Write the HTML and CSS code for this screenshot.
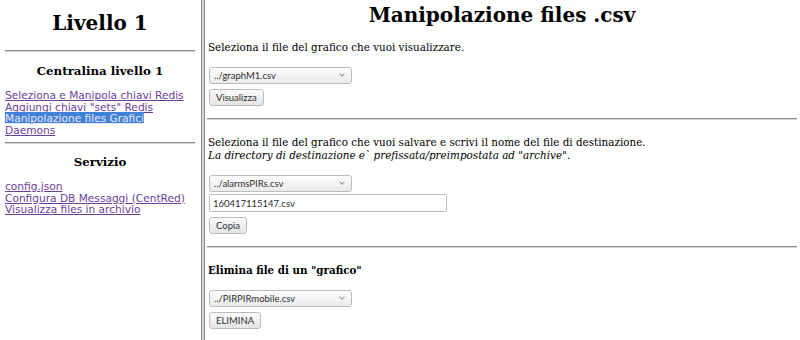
FILE: index.html
```html
<!DOCTYPE html>
<html lang="it">
<head>
    <meta charset="UTF-8">
    <title>Manipolazione files .csv</title>
    <link rel="stylesheet" href="styles.css">
</head>
<body>

    <div class="menu">
        <h1 class="menu__title">Livello 1</h1>
        <hr>
        <h3 class="menu__head">Centralina livello 1</h3>
        <div class="menu__links">
            <a href="#">Seleziona e Manipola chiavi Redis</a><br>
            <a href="#">Aggiungi chiavi "sets" Redis</a><br>
            <a href="#" class="sel">Manipolazione files Grafici</a><br>
            <a href="#">Daemons</a>
        </div>
        <hr>
        <h3 class="menu__head">Servizio</h3>
        <div class="menu__links">
            <a href="#">config.json</a><br>
            <a href="#">Configura DB Messaggi (CentRed)</a><br>
            <a href="#">Visualizza files in archivio</a>
        </div>
    </div>

    <div class="divider"></div>

    <div class="main">
        <h1 class="main__title">Manipolazione files .csv</h1>

        <form class="block block--first">
            <p>Seleziona il file del grafico che vuoi visualizzare.</p>
            <div class="select">../graphM1.csv</div>
            <button type="button">Visualizza</button>
        </form>
        <hr>

        <form class="block">
            <p>Seleziona il file del grafico che vuoi salvare e scrivi il nome del file di destinazione.<br>
            <i>La directory di destinazione e` prefissata/preimpostata ad "archive"</i>.</p>
            <div class="select">../alarmsPIRs.csv</div>
            <input type="text" value="160417115147.csv">
            <button type="button">Copia</button>
        </form>
        <hr>

        <form class="block">
            <h3 class="block__head">Elimina file di un "grafico"</h3>
            <div class="select">../PIRPIRmobile.csv</div>
            <button type="button">ELIMINA</button>
        </form>
    </div>

</body>
</html>
```

FILE: styles.css
```css
body {
    margin: 0;
    height: 340px;
    display: flex;
    font: 10.4px "DejaVu Serif", serif;
    color: #000;
    background: #fff;
}

hr {
    border: none;
    border-top: 1px solid #8c8c8c;
    border-bottom: 1px solid #d6d6d6;
    margin: 0;
}

/* left frame */
.menu {
    width: 190px;
    padding: 0 5px;
}
.menu__title {
    font-size: 20px;
    line-height: 23px;
    text-align: center;
    margin: 12px 0 15px;
}
.menu__head {
    font-size: 11.8px;
    line-height: 14px;
    text-align: center;
    margin: 12px 0 12px;
}
.menu hr + .menu__head + .menu__links + hr + .menu__head {
    margin-top: 11px;
}
.menu__links {
    font-family: "DejaVu Sans", sans-serif;
    font-size: 10.6px;
    line-height: 11.5px;
    margin-bottom: 6px;
}
.menu__links a {
    color: #6b3d9c;
}
.menu__links a.sel {
    background: #3f81d8;
    color: #ece6f6;
}

.divider {
    width: 2px;
    margin: 0 1px;
    border-left: 1px solid #8a8a8a;
    border-right: 1px solid #8a8a8a;
    background: #d6d6d6;
}

/* right frame */
.main {
    flex: 1;
    padding: 0 3px 0 1px;
}
.main__title {
    font-size: 20px;
    line-height: 23px;
    text-align: center;
    margin: 4px 0 1px;
}
.block {
    display: flex;
    flex-direction: column;
    align-items: flex-start;
    padding: 16px 0 12px 1px;
}
.block--first {
    padding-top: 13px;
}
.block p {
    margin: 0 0 13px;
    line-height: 13px;
}
.block__head {
    font-size: 10.3px;
    line-height: 13px;
    margin: 0 0 13px;
}

.select,
button,
input {
    font: 9.5px Lato, sans-serif;
    color: #2e2e2e;
    border: 1px solid #bcbcbc;
    border-radius: 3px;
    box-sizing: border-box;
    margin: 0 0 0 1px;
}
.select {
    width: 143px;
    height: 17px;
    line-height: 15px;
    padding: 0 4px;
    background: linear-gradient(#fdfdfd, #eaeaea);
    position: relative;
}
.select::after {
    content: "";
    position: absolute;
    right: 7px;
    top: 4px;
    width: 3px;
    height: 3px;
    border-right: 1px solid #9a9a9a;
    border-bottom: 1px solid #9a9a9a;
    transform: rotate(45deg);
}
button {
    height: 17px;
    margin-top: 5px;
    padding: 0 6px;
    background: linear-gradient(#fbfbfb, #e6e6e6);
}
input {
    width: 238px;
    height: 18px;
    margin-top: 2px;
    padding: 0 3px;
    background: #fff;
    border-radius: 2px;
}
```
